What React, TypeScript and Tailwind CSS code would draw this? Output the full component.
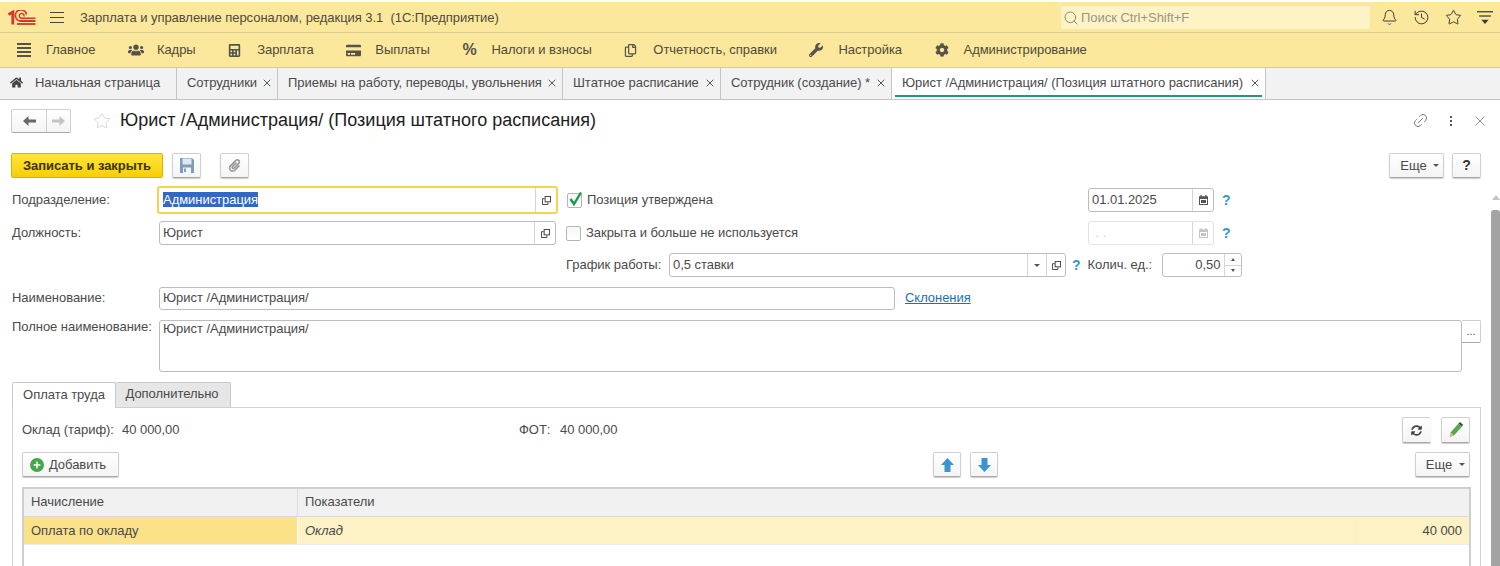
import { Bell, History, Star, Link2, X, Search } from "lucide-react";
import { FaHome, FaUsers, FaCalculator, FaCreditCard, FaRegCopy, FaWrench, FaCog, FaPaperclip, FaSyncAlt, FaPlus } from "react-icons/fa";
import type { ReactNode } from "react";

const navItems = [
  { label: "Главное", icon: <MenuLines /> },
  { label: "Кадры", icon: <FaUsers size={16} /> },
  { label: "Зарплата", icon: <FaCalculator size={13} /> },
  { label: "Выплаты", icon: <FaCreditCard size={15} /> },
  { label: "Налоги и взносы", icon: <span className="text-[16px] leading-none font-bold">%</span> },
  { label: "Отчетность, справки", icon: <FaRegCopy size={13} /> },
  { label: "Настройка", icon: <FaWrench size={14} /> },
  { label: "Администрирование", icon: <FaCog size={14} /> },
];

function MenuLines() {
  return (
    <svg width="14" height="15" viewBox="0 0 14 15" fill="#55534a">
      <rect y="0" width="14" height="2" />
      <rect y="4" width="14" height="2" />
      <rect y="8" width="14" height="2" />
      <rect y="12" width="14" height="2" />
    </svg>
  );
}

function Logo() {
  return (
    <svg width="28" height="16" viewBox="0 0 28 16" fill="none" stroke="#d8352a">
      <path d="M0.5 4.5 L4.8 2 V14.5" strokeWidth="2.8" />
      <path d="M18.5 4.5 A5.6 5.6 0 1 0 13 11 H27.5" strokeWidth="1.8" />
      <path d="M16 6.5 A2.4 2.4 0 1 0 14 8.2 H27.5" strokeWidth="1.4" />
      <path d="M9 14 H27.5" strokeWidth="1.8" />
    </svg>
  );
}

function Tab({ label, width, active }: { label: string; width: string; active?: boolean }) {
  return (
    <div className={`relative flex h-full items-center justify-between border-r border-[#c4c4c4] pb-[2px] pl-[10px] pr-[4px] ${width} ${active ? "bg-white" : ""}`}>
      <span className="whitespace-nowrap">{label}</span>
      <X size={12} className="text-[#555]" />
      {active && <div className="absolute bottom-[2px] left-[3px] right-[3px] h-[2px] bg-[#1f9c6e]" />}
    </div>
  );
}

function OpenIcon() {
  return (
    <svg width="9" height="9" viewBox="0 0 10 10" fill="none" stroke="#444" strokeWidth="1.1">
      <rect x="3.5" y="0.5" width="6" height="6" />
      <path d="M3 3 H0.5 V9.5 H6.5 V7" />
    </svg>
  );
}

function CalendarIcon({ color }: { color: string }) {
  return (
    <svg width="9" height="10" viewBox="0 0 9 10" fill={color}>
      <rect x="1.5" y="0" width="1.2" height="2" />
      <rect x="6.3" y="0" width="1.2" height="2" />
      <path d="M0 1.2 H9 V10 H0 Z M1 4 V9 H8 V4 Z" fillRule="evenodd" />
      <rect x="2" y="5" width="5" height="3" />
    </svg>
  );
}

function SaveIcon() {
  return (
    <svg width="14" height="15" viewBox="0 0 14 15">
      <path d="M0 0 H12 L14 2 V15 H0 Z" fill="#7d9cbe" />
      <rect x="2.5" y="0.5" width="9" height="6" fill="#dfe8f1" />
      <rect x="3" y="9.5" width="8" height="5.5" fill="#f2f5f8" />
      <rect x="4" y="10.5" width="2" height="3.5" fill="#7d9cbe" />
    </svg>
  );
}

function PencilIcon() {
  return (
    <svg width="14" height="16" viewBox="0 0 14 16">
      <path d="M9.5 1.5 L13 4.5 L5 13.5 L1.5 10.5 Z" fill="#55a84f" />
      <path d="M9.5 1.5 L11 0 L14 2.8 L13 4.5 Z" fill="#444" />
      <path d="M1.5 10.5 L5 13.5 L0.5 15.5 Z" fill="#d8b27a" />
    </svg>
  );
}

function BlockArrow({ down }: { down?: boolean }) {
  return (
    <svg width="13" height="14" viewBox="0 0 13 14" fill="#3a94d2" className={down ? "rotate-180" : ""}>
      <path d="M6.5 0 L13 7 H9.5 V14 H3.5 V7 H0 Z" />
    </svg>
  );
}

function NavArrow({ color, right }: { color: string; right?: boolean }) {
  return (
    <svg width="13" height="10" viewBox="0 0 13 10" fill={color} className={right ? "rotate-180" : ""}>
      <path d="M0 5 L5.5 0 V3.5 H13 V6.5 H5.5 V10 Z" />
    </svg>
  );
}

function Caret() {
  return <span className="h-0 w-0 border-x-[3px] border-t-[3px] border-x-transparent border-t-[#555]" />;
}

function Btn({ children, className }: { children: ReactNode; className: string }) {
  return (
    <div className={`flex shrink-0 items-center justify-center rounded-[2px] border border-[#cfcfcf] border-b-[#a8a8a8] bg-gradient-to-b from-white to-[#f4f4f4] shadow-[0_1px_1px_#ccc] ${className}`}>
      {children}
    </div>
  );
}

function Field({ children, className, side }: { children?: ReactNode; className: string; side?: ReactNode }) {
  return (
    <div className={`flex shrink-0 items-center rounded-[3px] border border-[#bdbdbd] bg-white ${className}`}>
      <div className="min-w-0 flex-1 truncate pl-[3px]">{children}</div>
      {side}
    </div>
  );
}

function SideBox({ children }: { children: ReactNode }) {
  return <div className="flex h-full w-[21px] shrink-0 items-center justify-center border-l border-[#d5d5d5]">{children}</div>;
}

function Hint() {
  return <span className="text-[14px] font-bold text-[#3a93c8]">?</span>;
}

function Checkbox({ checked }: { checked?: boolean }) {
  return (
    <div className="relative h-[15px] w-[15px] shrink-0 rounded-[2px] border border-[#b5b5b5] bg-gradient-to-b from-[#f6f6f6] to-white">
      {checked && (
        <svg className="absolute left-[0px] top-[-3px]" width="15" height="16" viewBox="0 0 15 16" fill="none" stroke="#159a4c" strokeWidth="2.4">
          <path d="M2.5 8 L6 13 L13 1.5" />
        </svg>
      )}
    </div>
  );
}

export default function App() {
  return (
    <div className="flex h-[566px] w-[1500px] flex-col overflow-hidden bg-white font-['Liberation_Sans',Arial,sans-serif] text-[13px] tracking-[-0.04px] text-[#4a4a4a]">
      {/* Title bar */}
      <div className="mt-[2px] flex h-[31px] shrink-0 items-center border-b border-[#d9cf96] bg-[#fbe89c] pl-[8px] pt-[1px]">
        <Logo />
        <div className="ml-[14px] flex w-[14px] flex-col gap-[4px]">
          <div className="h-px bg-[#444]" />
          <div className="h-px bg-[#444]" />
          <div className="h-px bg-[#444]" />
        </div>
        <span className="ml-[16px] whitespace-nowrap text-[#4f4b3a]">Зарплата и управление персоналом, редакция 3.1 &nbsp;(1С:Предприятие)</span>
        <div className="ml-auto flex h-[23px] w-[309px] items-center gap-[2px] rounded-[2px] bg-[#fdf3c4] pl-[2px] text-[#9a9686]">
          <Search size={16} strokeWidth={1.5} className="text-[#8a8878]" />
          <span>Поиск Ctrl+Shift+F</span>
        </div>
        <div className="ml-[11px] flex w-[119px] items-center gap-[15px] text-[#3c3c3c]">
          <Bell size={17} strokeWidth={1.4} />
          <History size={17} strokeWidth={1.4} />
          <Star size={17} strokeWidth={1.4} />
          <svg width="16" height="15" viewBox="0 0 15 14" fill="#3c3c3c">
            <rect width="15" height="1.2" y="1" />
            <rect width="11" height="1.2" x="2" y="5" />
            <path d="M4 9 H11 L7.5 13 Z" />
          </svg>
        </div>
      </div>

      {/* Section nav */}
      <div className="flex h-[35px] shrink-0 items-center gap-[32.5px] border-b border-[#d6cd98] bg-[#fbe89c] pl-[17px] text-[#4f4b3a]">
        {navItems.map((item) => (
          <div key={item.label} className="flex items-center">
            <div className="flex w-[29px] items-center text-[#55534a]">{item.icon}</div>
            <span className="whitespace-nowrap">{item.label}</span>
          </div>
        ))}
      </div>

      {/* Open tabs */}
      <div className="flex h-[32px] shrink-0 items-center border-b border-[#c4c4c4] bg-[#f2f2f2]">
        <div className="flex h-full w-[177px] items-center gap-[12px] border-r border-[#c4c4c4] pb-[2px] pl-[10px]">
          <FaHome size={13} className="text-[#444]" />
          <span>Начальная страница</span>
        </div>
        <Tab label="Сотрудники" width="w-[101px]" />
        <Tab label="Приемы на работу, переводы, увольнения" width="w-[285px]" />
        <Tab label="Штатное расписание" width="w-[158px]" />
        <Tab label="Сотрудник (создание) *" width="w-[171px]" />
        <Tab label="Юрист /Администрация/ (Позиция штатного расписания)" width="w-[374px]" active />
      </div>

      <div className="flex min-h-0 flex-1">
        <div className="min-w-0 flex-1">
          {/* Form header */}
          <div className="flex h-[40px] items-center pl-[11px] pt-[1px]">
            <div className="flex h-[24px] w-[60px] rounded-[2px] border border-[#cfcfcf] border-b-[#a8a8a8] bg-gradient-to-b from-white to-[#f4f4f4]">
              <div className="flex w-[35px] items-center justify-center border-r border-[#cfcfcf]">
                <NavArrow color="#666" />
              </div>
              <div className="flex flex-1 items-center justify-center">
                <NavArrow color="#c4c4c4" right />
              </div>
            </div>
            <Star size={18} strokeWidth={1} className="ml-[22px] text-[#c9c9c9]" />
            <span className="ml-[9px] text-[18px] tracking-[0.02px] whitespace-nowrap text-[#1d1d1d]">Юрист /Администрация/ (Позиция штатного расписания)</span>
            <div className="ml-auto flex items-center pr-[3px] text-[#777]">
              <Link2 size={17} strokeWidth={1.3} className="-rotate-45" />
              <div className="ml-[21px] flex flex-col gap-[2px]">
                <div className="h-[2px] w-[2px] bg-[#555]" />
                <div className="h-[2px] w-[2px] bg-[#555]" />
                <div className="h-[2px] w-[2px] bg-[#555]" />
              </div>
              <X size={16} strokeWidth={1.2} className="ml-[20px]" />
            </div>
          </div>

          {/* Command bar */}
          <div className="mt-[13px] flex h-[25px] items-center pl-[11px] pr-[10px]">
            <div className="flex h-[25px] w-[152px] items-center justify-center rounded-[2px] border border-[#d8b400] bg-gradient-to-b from-[#ffe633] to-[#f8ce00] font-bold text-[#3c3300]">
              Записать и закрыть
            </div>
            <Btn className="ml-[9px] h-[25px] w-[29px]">
              <SaveIcon />
            </Btn>
            <Btn className="ml-[19px] h-[25px] w-[29px]">
              <FaPaperclip size={13} className="text-[#999]" />
            </Btn>
            <Btn className="ml-auto h-[25px] w-[55px] gap-[6px] pl-[6px]">
              <span>Еще</span>
              <Caret />
            </Btn>
            <Btn className="ml-[8px] h-[25px] w-[29px] text-[14px] font-bold text-[#333]">?</Btn>
          </div>

          {/* Row 1 */}
          <div className="mt-[8px] flex h-[28px] items-center pl-[12px]">
            <span className="w-[145px] shrink-0">Подразделение:</span>
            <Field className="h-[28px] w-[401px] border-2 border-[#f2d54d]" side={<SideBox><OpenIcon /></SideBox>}>
              <span className="ml-[1px] bg-[#3367c4] text-white">Администрация</span>
            </Field>
            <div className="ml-[9px] flex w-[521px] items-center gap-[5px]">
              <Checkbox checked />
              <span>Позиция утверждена</span>
            </div>
            <Field className="h-[24px] w-[126px] border-[#9d9d9d]" side={<SideBox><CalendarIcon color="#555" /></SideBox>}>
              01.01.2025
            </Field>
            <span className="ml-[8px]"><Hint /></span>
          </div>

          {/* Row 2 */}
          <div className="mt-[7px] flex h-[24px] items-center pl-[12px]">
            <span className="w-[147px] shrink-0">Должность:</span>
            <Field className="h-[24px] w-[397px]" side={<SideBox><OpenIcon /></SideBox>}>
              Юрист
            </Field>
            <div className="ml-[10px] flex w-[522px] items-center gap-[5px]">
              <Checkbox />
              <span>Закрыта и больше не используется</span>
            </div>
            <Field className="h-[24px] w-[126px] border-[#e2e2e2] text-[#ccc]" side={<SideBox><CalendarIcon color="#c4c4c4" /></SideBox>}>
              &nbsp;. .
            </Field>
            <span className="ml-[8px]"><Hint /></span>
          </div>

          {/* Row 3 */}
          <div className="mt-[8px] flex h-[24px] items-center pl-[566px]">
            <span className="w-[103px] shrink-0">График работы:</span>
            <Field
              className="h-[24px] w-[397px]"
              side={
                <>
                  <div className="flex h-full w-[19px] items-center justify-center border-l border-[#d5d5d5]">
                    <Caret />
                  </div>
                  <div className="flex h-full w-[19px] items-center justify-center border-l border-[#d5d5d5]"><OpenIcon /></div>
                </>
              }
            >
              0,5 ставки
            </Field>
            <span className="ml-[6px]"><Hint /></span>
            <span className="ml-[7px] w-[74px] shrink-0 whitespace-nowrap">Колич. ед.:</span>
            <div className="flex h-[24px] w-[80px] items-center rounded-[3px] border border-[#bdbdbd]">
              <span className="flex-1 pr-[3px] text-right">0,50</span>
              <div className="flex h-full w-[17px] flex-col border-l border-[#d5d5d5]">
                <div className="flex flex-1 items-center justify-center border-b border-[#d5d5d5]">
                  <span className="h-0 w-0 border-x-[2px] border-b-[3px] border-x-transparent border-b-[#555]" />
                </div>
                <div className="flex flex-1 items-center justify-center">
                  <span className="h-0 w-0 border-x-[2px] border-t-[3px] border-x-transparent border-t-[#555]" />
                </div>
              </div>
            </div>
          </div>

          {/* Row 4 */}
          <div className="mt-[10px] flex h-[23px] items-center pl-[12px]">
            <span className="w-[147px] shrink-0 pb-[2px]">Наименование:</span>
            <Field className="h-[23px] w-[736px] pb-[2px]">Юрист /Администрация/</Field>
            <span className="ml-[10px] pb-[2px] text-[#1f6fb2] underline">Склонения</span>
          </div>

          {/* Row 5 */}
          <div className="mt-[10px] flex h-[52px] pl-[12px]">
            <span className="w-[147px] shrink-0 leading-[14px]">Полное наименование:</span>
            <div className="h-[52px] w-[1303px] shrink-0 rounded-[3px] border border-[#bdbdbd] pl-[3px] leading-[15px]">Юрист /Администрация/</div>
            <div className="flex h-[23px] w-[19px] shrink-0 items-center justify-center rounded-r-[2px] border border-l-0 border-[#cfcfcf] border-b-[#a8a8a8] text-[11px] leading-none">...</div>
          </div>

          {/* Page tabs */}
          <div className="mt-[9px] flex h-[26px] items-end pl-[12px]">
            <div className="z-10 mb-[-1px] flex h-[26px] w-[104px] items-center justify-center rounded-t-[2px] border border-b-0 border-[#c8c8c8] bg-white pb-[2px]">Оплата труда</div>
            <div className="flex h-[25px] w-[115px] items-center justify-center rounded-t-[2px] border border-l-0 border-b-0 border-[#c8c8c8] bg-[#e6e6e6] pb-[2px] pr-[2px]">Дополнительно</div>
          </div>

          {/* Page panel */}
          <div className="ml-[12px] h-[200px] w-[1469px] border border-[#d0d0d0] pl-[9px] pr-[10px] pt-[9px]">
            <div className="flex h-[26px] items-center">
              <span className="w-[100px] shrink-0">Оклад (тариф):</span>
              <span className="w-[397px] shrink-0">40 000,00</span>
              <span className="w-[41px] shrink-0">ФОТ:</span>
              <span>40 000,00</span>
              <Btn className="ml-auto h-[26px] w-[29px] border-r-transparent"><FaSyncAlt size={11} className="text-[#444]" /></Btn>
              <Btn className="ml-[10px] h-[26px] w-[29px]"><PencilIcon /></Btn>
            </div>

            <div className="mt-[9px] flex h-[25px] items-center">
              <Btn className="h-[25px] w-[97px] gap-[5px] pr-[5px]">
                <span className="flex h-[14px] w-[14px] items-center justify-center rounded-full bg-[#43a84a]">
                  <FaPlus size={8} className="text-white" />
                </span>
                <span>Добавить</span>
              </Btn>
              <Btn className="ml-[814px] h-[25px] w-[28px]"><BlockArrow /></Btn>
              <Btn className="ml-[9px] h-[25px] w-[28px]"><BlockArrow down /></Btn>
              <Btn className="ml-auto h-[25px] w-[55px] gap-[7px] pl-[6px]">
                <span>Еще</span>
                <Caret />
              </Btn>
            </div>

            {/* Table */}
            <div className="mt-[10px] h-[120px] w-[1449px] border-2 border-[#cfcfcf] border-b-0">
              <div className="flex h-[28px] items-center border-b border-[#d8d8d8] bg-[#f1f1f1]">
                <div className="flex h-full w-[274px] items-center border-r border-[#dcdcdc] pb-[2px] pl-[7px]">Начисление</div>
                <div className="pb-[2px] pl-[7px]">Показатели</div>
              </div>
              <div className="flex h-[28px] items-center border-b border-[#ececec] bg-[#fdf1c6]">
                <div className="flex h-full w-[274px] items-center border-r border-[#fff] bg-[#fbe288] pl-[7px]">Оплата по окладу</div>
                <div className="flex h-full w-[1058px] items-center border-r border-[#f7edd0] pl-[7px] italic">Оклад</div>
                <div className="flex-1 pr-[7px] text-right">40 000</div>
              </div>
            </div>
          </div>
        </div>

        {/* Scrollbar */}
        <div className="flex w-[9px] shrink-0 flex-col items-center">
          <div className="mt-[95px] h-0 w-0 border-x-[4px] border-b-[5px] border-x-transparent border-b-[#c4c4c4]" />
          <div className="mt-[10px] w-full flex-1 rounded-t-[3px] bg-[#a3a3a3]" />
        </div>
      </div>
    </div>
  );
}
